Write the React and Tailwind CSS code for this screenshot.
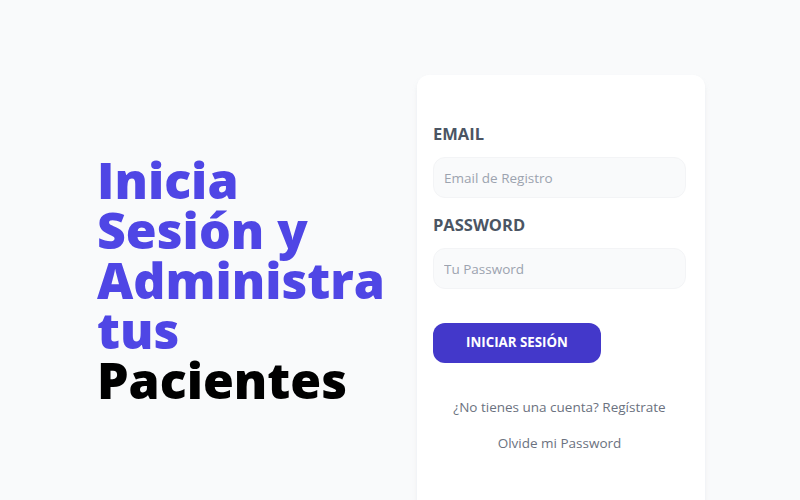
import React from 'react';

export default function App() {
  return (
    <div className="min-h-[500px] h-[500px] bg-[#f9fafb] overflow-hidden" style={{ fontFamily: '"Open Sans", sans-serif' }}>
      <main className="flex items-start pl-[97px] pt-[75px]">
        {/* Titulo */}
        <div className="w-[320px] pt-[80px]">
          <h1 className="text-[#4f46e5] font-extrabold text-[50px] leading-[50px] w-[300px]">
            Inicia Sesión y Administra tus <span className="text-black">Pacientes</span>
          </h1>
        </div>

        {/* Formulario */}
        <div className="w-[288px] h-[440px] bg-white rounded-xl shadow-md shadow-gray-200/60 pl-4 pr-[19px] pt-[45px]">
          <form>
            <div>
              <label className="uppercase text-[#4b5563] block text-[16.5px] leading-[28px] font-bold">Email</label>
              <input
                type="email"
                placeholder="Email de Registro"
                className="w-full mt-[9px] h-[41px] border border-[#f3f4f6] px-[10px] rounded-xl bg-[#f9fafb] text-[13.5px] placeholder:text-[#9ca3af]"
              />
            </div>
            <div className="mt-[13px]">
              <label className="uppercase text-[#4b5563] block text-[16.5px] leading-[28px] font-bold">Password</label>
              <input
                type="password"
                placeholder="Tu Password"
                className="w-full mt-[9px] h-[41px] border border-[#f3f4f6] px-[10px] rounded-xl bg-[#f9fafb] text-[13.5px] placeholder:text-[#9ca3af]"
              />
            </div>
            <button
              type="button"
              className="mt-[34px] w-[168px] h-[40px] bg-[#4338ca] text-white uppercase font-bold text-[13.3px] rounded-xl"
            >
              Iniciar Sesión
            </button>
          </form>

          <nav className="mt-[34px] flex flex-col items-center gap-4 text-[13.5px] leading-5 text-[#6b7280]">
            <a href="#">¿No tienes una cuenta? Regístrate</a>
            <a href="#">Olvide mi Password</a>
          </nav>
        </div>
      </main>
    </div>
  );
}
